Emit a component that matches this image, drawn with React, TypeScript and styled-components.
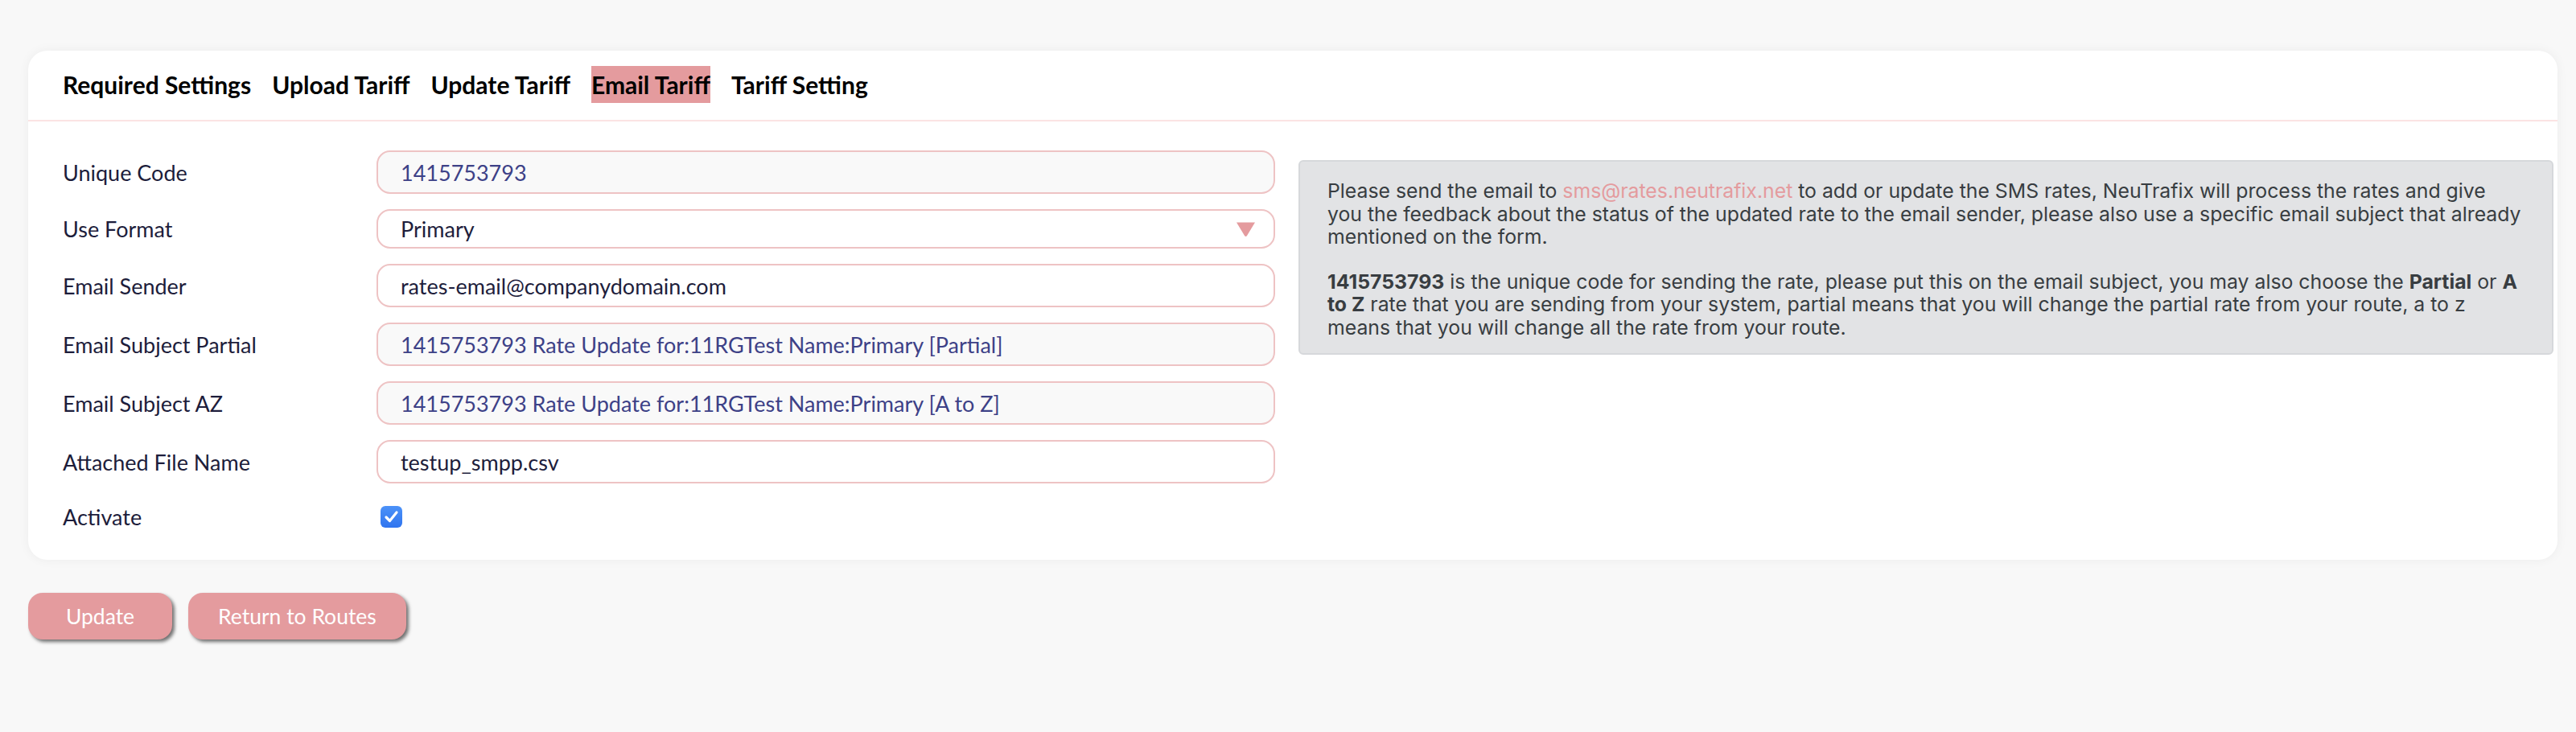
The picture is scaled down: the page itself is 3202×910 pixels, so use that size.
import React from "react";
import styled, { createGlobalStyle } from "styled-components";

const Global = createGlobalStyle`
  html, body { margin: 0; padding: 0; background: #f8f8f8; }
  body { font-family: "Lato", "Noto Sans", sans-serif; }
  * { box-sizing: border-box; }
`;

const Page = styled.div`
  padding: 63px 23px 40px 35px;
  min-height: 910px;
  background: #f8f8f8;
`;

const Card = styled.div`
  background: #ffffff;
  border-radius: 24px;
  box-shadow: 0 0 14px rgba(0, 0, 0, 0.05);
`;

const TabBar = styled.nav`
  display: flex;
  align-items: center;
  gap: 26px;
  padding: 19px 43px 21px;
  border-bottom: 2px solid #fbe3e3;
`;

const Tab = styled.span<{ $active?: boolean }>`
  display: flex;
  align-items: center;
  height: 46px;
  font-family: "Lato", sans-serif;
  font-weight: 700;
  font-size: 30px;
  color: #000;
  background: ${(p) => (p.$active ? "#e49b9e" : "transparent")};
`;

const Body = styled.div`
  display: flex;
  align-items: flex-start;
  padding: 36px 5px 37px 43px;
`;

const FormCol = styled.div`
  width: 1507px;
  display: flex;
  flex-direction: column;
  gap: 19px;
`;

const Row = styled.div`
  display: grid;
  grid-template-columns: 390px 1fr;
  align-items: center;
`;

const CheckRow = styled(Row)`
  margin-top: 6px;
`;

const Label = styled.label`
  font-family: "Lato", sans-serif;
  font-size: 27px;
  color: #1d1d3b;
`;

const Field = styled.div<{ $readOnly?: boolean; $short?: boolean }>`
  position: relative;
  display: flex;
  align-items: center;
  height: ${(p) => (p.$short ? "49px" : "54px")};
  padding: 0 28px;
  border: 2px solid #eec3c4;
  border-radius: 17px;
  background: ${(p) => (p.$readOnly ? "#f9f9f9" : "#ffffff")};
  font-family: "Lato", sans-serif;
  font-size: 27px;
  color: ${(p) => (p.$readOnly ? "#3d4187" : "#1e1e3c")};
`;

const Arrow = styled.svg`
  position: absolute;
  right: 22px;
  top: 50%;
  transform: translateY(-50%);
`;

const CheckBox = styled.span`
  display: inline-flex;
  align-items: center;
  justify-content: center;
  width: 27px;
  height: 27px;
  margin-left: 5px;
  border-radius: 6px;
  background: linear-gradient(#4c92f8, #2f74ef);
`;

const InfoCol = styled.div`
  flex: 1;
  margin-left: 29px;
  margin-top: 12px;
`;

const InfoBox = styled.div`
  background: #e2e3e5;
  border: 2px solid #d6d8db;
  border-radius: 6px;
  padding: 22px 34px 18px;
  font-family: "Inter", "Noto Sans", sans-serif;
  font-size: 24.8px;
  line-height: 28.5px;
  color: #383d41;
  p { margin: 0; }
  p + p { margin-top: 27px; }
  b { font-weight: 700; }
`;

const Link = styled.span`
  color: #e49b9e;
`;

const Actions = styled.div`
  display: flex;
  gap: 20px;
  margin-top: 41px;
`;

const Button = styled.button`
  height: 58px;
  min-width: 179px;
  padding: 0 37px;
  border: none;
  border-radius: 18px;
  background: #e49b9e;
  color: #fff;
  font-family: "Lato", sans-serif;
  font-size: 26.5px;
  box-shadow: 3px 3px 4px rgba(0, 0, 0, 0.55);
`;

const fields: { label: string; value: string; readOnly?: boolean; select?: boolean }[] = [
  { label: "Unique Code", value: "1415753793", readOnly: true },
  { label: "Use Format", value: "Primary", select: true },
  { label: "Email Sender", value: "rates-email@companydomain.com" },
  { label: "Email Subject Partial", value: "1415753793 Rate Update for:11RGTest Name:Primary [Partial]", readOnly: true },
  { label: "Email Subject AZ", value: "1415753793 Rate Update for:11RGTest Name:Primary [A to Z]", readOnly: true },
  { label: "Attached File Name", value: "testup_smpp.csv" },
];

const tabs = ["Required Settings", "Upload Tariff", "Update Tariff", "Email Tariff", "Tariff Setting"];

export default function App() {
  return (
    <>
      <Global />
      <Page>
        <Card>
          <TabBar>
            {tabs.map((t) => (
              <Tab key={t} $active={t === "Email Tariff"}>
                {t}
              </Tab>
            ))}
          </TabBar>
          <Body>
            <FormCol>
              {fields.map((f) => (
                <Row key={f.label}>
                  <Label>{f.label}</Label>
                  <Field $readOnly={f.readOnly} $short={f.select}>
                    {f.value}
                    {f.select && (
                      <Arrow width="25" height="19" viewBox="0 0 25 19">
                        <path d="M1 1 L24 1 L14 17.5 Q12.5 19.5 11 17.5 Z" fill="#e49b9e" />
                      </Arrow>
                    )}
                  </Field>
                </Row>
              ))}
              <CheckRow>
                <Label>Activate</Label>
                <div>
                  <CheckBox>
                    <svg width="19" height="17" viewBox="0 0 19 17">
                      <path d="M3 9 L7.5 13.5 L16 3" fill="none" stroke="#fff" strokeWidth="3.2" strokeLinecap="round" strokeLinejoin="round" />
                    </svg>
                  </CheckBox>
                </div>
              </CheckRow>
            </FormCol>
            <InfoCol>
              <InfoBox>
                <p>
                  Please send the email to <Link>sms@rates.neutrafix.net</Link> to add or update the SMS rates, NeuTrafix
                  will process the rates and give you the feedback about the status of the updated rate to the email
                  sender, please also use a specific email subject that already mentioned on the form.
                </p>
                <p>
                  <b>1415753793</b> is the unique code for sending the rate, please put this on the email subject, you may
                  also choose the <b>Partial</b> or <b>A to Z</b> rate that you are sending from your system, partial means
                  that you will change the partial rate from your route, a to z means that you will change all the rate
                  from your route.
                </p>
              </InfoBox>
            </InfoCol>
          </Body>
        </Card>
        <Actions>
          <Button>Update</Button>
          <Button>Return to Routes</Button>
        </Actions>
      </Page>
    </>
  );
}
